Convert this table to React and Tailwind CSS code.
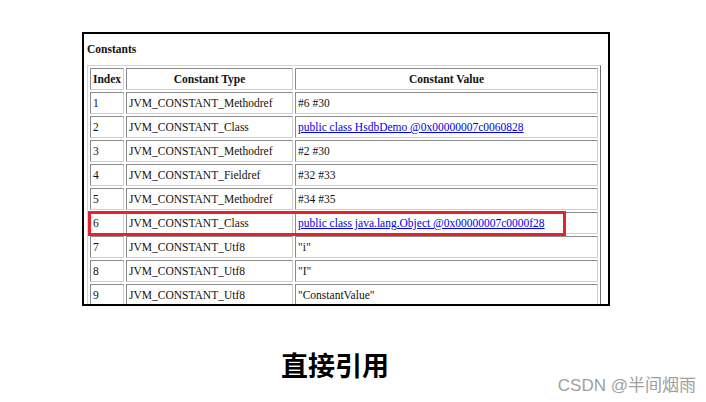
const rows = [
  { idx: '1', type: 'JVM_CONSTANT_Methodref', value: '#6 #30' },
  { idx: '2', type: 'JVM_CONSTANT_Class', value: 'public class HsdbDemo @0x00000007c0060828', link: true },
  { idx: '3', type: 'JVM_CONSTANT_Methodref', value: '#2 #30' },
  { idx: '4', type: 'JVM_CONSTANT_Fieldref', value: '#32 #33' },
  { idx: '5', type: 'JVM_CONSTANT_Methodref', value: '#34 #35' },
  { idx: '6', type: 'JVM_CONSTANT_Class', value: 'public class java.lang.Object @0x00000007c0000f28', link: true },
  { idx: '7', type: 'JVM_CONSTANT_Utf8', value: '"i"' },
  { idx: '8', type: 'JVM_CONSTANT_Utf8', value: '"I"' },
  { idx: '9', type: 'JVM_CONSTANT_Utf8', value: '"ConstantValue"' },
];

const cell =
  'border border-t-[#8c8c8c] border-l-[#8c8c8c] border-r-[#cfcfcf] border-b-[#cfcfcf] h-[22px] px-[2px] py-0 leading-[20px] whitespace-nowrap overflow-hidden';

export default function App() {
  return (
    <div className="relative w-[706px] h-[402px] bg-white overflow-hidden">
      {/* screenshot of the HSDB constant pool window */}
      <div className="ml-[82px] mt-[32px] w-[528px] h-[274px] border-2 border-black overflow-hidden px-[3px] pt-[7px] font-['Liberation_Serif',serif] text-[11.5px] text-[#111]">
        <div className="font-bold leading-[16px]">Constants</div>
        <table className="mt-[8px] w-[514px] table-fixed border-separate border-spacing-[2px] border border-t-[#d4d4d4] border-l-[#d4d4d4] border-r-[#6e6e6e] border-b-[#6e6e6e]">
          <thead>
            <tr>
              <th className={`${cell} w-[34px] text-center`}>Index</th>
              <th className={`${cell} w-[167px] text-center`}>Constant Type</th>
              <th className={`${cell} text-center`}>Constant Value</th>
            </tr>
          </thead>
          <tbody>
            {rows.map((r) => (
              <tr key={r.idx}>
                <td className={cell}>{r.idx}</td>
                <td className={cell}>{r.type}</td>
                <td className={cell}>
                  {r.link ? (
                    <span className="text-[#0000ee] underline">{r.value}</span>
                  ) : (
                    r.value
                  )}
                </td>
              </tr>
            ))}
          </tbody>
        </table>
      </div>

      {/* red highlight over row 6 */}
      <div className="absolute left-[88px] top-[211px] w-[478px] h-[25px] border-[3px] border-[#e5232c]"></div>

      <div className="mt-[42px] pl-[281px] font-['Noto_Sans_CJK_SC',sans-serif] font-bold text-[27px] leading-[34px] text-black">
        直接引用
      </div>

      <div className="absolute right-[10px] bottom-[4px] font-['Liberation_Sans','Noto_Sans_CJK_SC',sans-serif] text-[17px] text-[#a0a0a0]">
        CSDN @半间烟雨
      </div>
    </div>
  );
}
